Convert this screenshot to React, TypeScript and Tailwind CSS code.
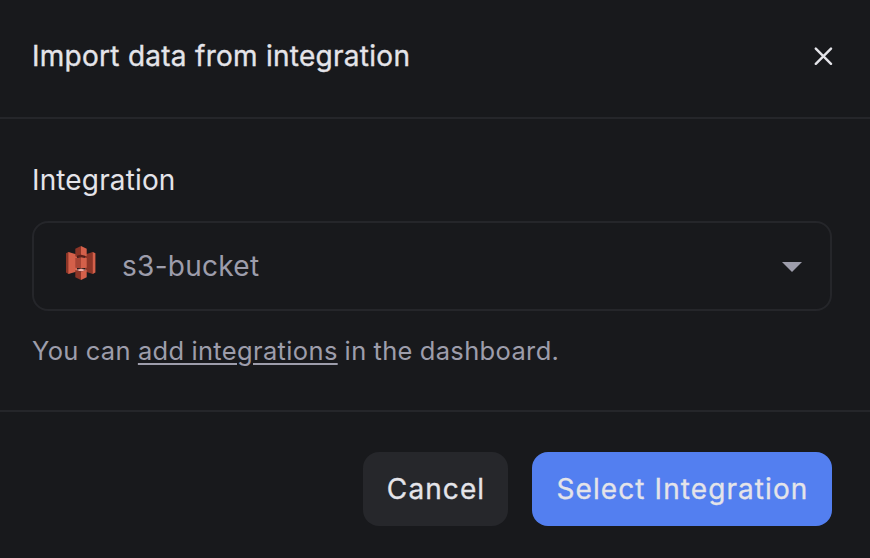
import React from "react";

function S3Icon() {
  return (
    <svg className="h-[34px] w-[30px] shrink-0" viewBox="0 0 30 34" aria-hidden="true">
      <path d="M2.4 6 0 7.2v19.4L2.4 28l1-.8V6.8z" fill="#8c3527" />
      <path d="M2.4 6 11 8.6v17L2.4 28z" fill="#d4604a" />
      <path d="M26.8 6 29.4 7.2v19.4L26.8 28l-1-.8V6.8z" fill="#d4604a" />
      <path d="M26.8 6 19 8.6v17l7.8 2.4z" fill="#8c3527" />
      <path d="M9.3 10.2 15 11.5l5.7-1.3L15 8.7z" fill="#5e1f18" />
      <path d="M9.3 11.9 15 11.2v11.4l-5.7-.8z" fill="#a84535" />
      <path d="M20.7 11.9 15 11.2v11.4l5.7-.8z" fill="#d4604a" />
      <path d="M9.3 24 15 22.7l5.7 1.3-5.7 1.6z" fill="#f2b0a9" />
      <path d="M15 0 9.3 2.8v7.4L15 8.7z" fill="#8c3527" />
      <path d="m15 0 5.7 2.8v7.4L15 8.7z" fill="#d4604a" />
      <path d="M9.3 24 15 25.4V34l-5.7-2.8z" fill="#8c3527" />
      <path d="M20.7 24 15 25.4V34l5.7-2.8z" fill="#d4604a" />
    </svg>
  );
}

export default function App() {
  return (
    <div className="flex h-[558px] w-full flex-col bg-[#18191c] font-['Inter',sans-serif] text-[#e4e4e9] antialiased">
      <header className="flex h-[119px] shrink-0 items-start justify-between border-b-2 border-[#25262a] pt-9 pr-[37px] pl-8">
        <h1 className="text-[28px] leading-10 font-normal tracking-[0.27px] whitespace-nowrap [-webkit-text-stroke:0.35px_currentColor]">Import data from integration</h1>
        <button type="button" aria-label="Close" className="mt-[11px]">
          <svg className="size-[19px]" viewBox="0 0 19 19" fill="none" stroke="currentColor" strokeWidth="2.4" strokeLinecap="round">
            <path d="m1.8 1.6 15.2 15.2M17 1.6 1.8 16.8" />
          </svg>
        </button>
      </header>
      <main className="flex h-[293px] shrink-0 flex-col border-b-2 border-[#25262a] pt-[41px] pr-[38px] pl-8">
        <label className="text-[28px] leading-10 tracking-[0.14px]">Integration</label>
        <button type="button" className="mt-[21px] flex h-[90px] shrink-0 items-center rounded-2xl border-2 border-[#25262a] pr-7 pl-8 text-left text-[#9d9dab]">
          <span className="mb-1.5">
            <S3Icon />
          </span>
          <span className="ml-[26px] flex-1 text-[28px] leading-10 tracking-[0.28px]">s3-bucket</span>
          <svg className="mt-0.5 h-2.5 w-5" viewBox="0 0 20 10" fill="currentColor">
            <path d="M0 0h20L10 10z" />
          </svg>
        </button>
        <p className="mt-5 text-[25.5px] leading-10 tracking-[0.35px] whitespace-nowrap text-[#9d9dab] [word-spacing:-0.6px]">
          You can <a className="underline decoration-2 underline-offset-[3px]">add integrations</a> in the dashboard.
        </p>
      </main>
      <footer className="flex justify-end gap-6 pt-10 pr-[38px]">
        <button type="button" className="h-[74px] w-[145px] rounded-2xl bg-[#26272b] pl-px text-[28px] font-normal tracking-[1.08px] [-webkit-text-stroke:0.3px_currentColor]">Cancel</button>
        <button type="button" className="h-[74px] w-[300px] rounded-2xl bg-[#537ff0] pl-px text-[28px] font-normal tracking-[1.08px] whitespace-nowrap [-webkit-text-stroke:0.3px_currentColor]">Select Integration</button>
      </footer>
    </div>
  );
}
